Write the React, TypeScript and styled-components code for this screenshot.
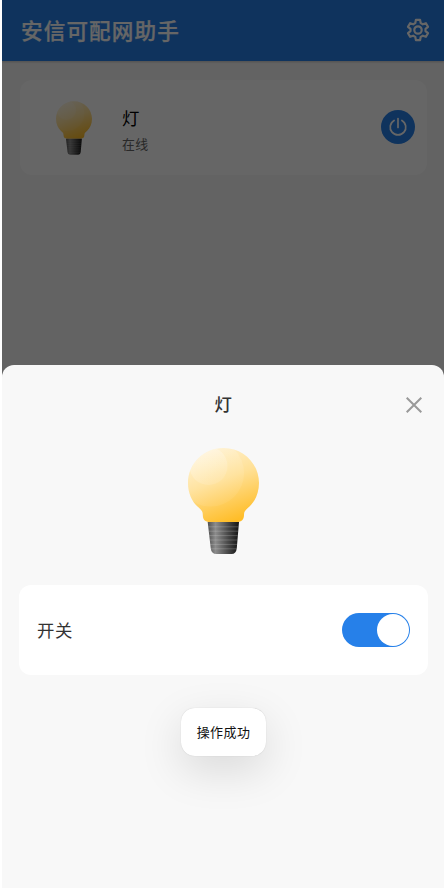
import React from 'react';
import styled, { createGlobalStyle } from 'styled-components';

const GlobalStyle = createGlobalStyle`
  * { box-sizing: border-box; }
  body { margin: 0; background: #fff; }
  button { border: 0; padding: 0; background: none; font: inherit; color: inherit; }
`;

const Screen = styled.main`
  position: relative;
  width: 442px;
  height: 888px;
  margin-left: 2px;
  overflow: hidden;
  background: #f7f7f7;
  color: #333;
  font-family: 'Noto Sans CJK SC', sans-serif;
`;

const Header = styled.header`
  display: flex;
  align-items: center;
  justify-content: space-between;
  height: 61px;
  padding: 0 14px 0 19px;
  background: #2680e9;
  color: #fff;
  box-shadow: 0 1px 2px rgba(0, 0, 0, 0.2);
`;

const Title = styled.h1`
  margin: 0 0 2px;
  font-size: 21.6px;
  letter-spacing: 1.1px;
  font-weight: 500;
  line-height: 30px;
  -webkit-text-stroke: 0.25px currentColor;
`;

const IconButton = styled.button`
  display: flex;
  align-items: center;
  justify-content: center;
  width: 24px;
  height: 24px;
`;

const SettingsButton = styled(IconButton)`
  margin-bottom: 1px;
`;

const DeviceCard = styled.section`
  display: flex;
  align-items: center;
  width: 407px;
  height: 95px;
  margin: 19px 0 0 18px;
  padding: 0 11.5px 0 36px;
  border-radius: 12px;
  background: #fff;
`;

const DeviceText = styled.div`
  flex: 1;
  margin-left: 30px;
  padding-top: 3px;
`;

const DeviceName = styled.div`
  color: #000;
  font-size: 17.4px;
  line-height: 26px;
`;

const DeviceStatus = styled.div`
  color: #666;
  font-size: 12.9px;
  letter-spacing: 0.3px;
  line-height: 20px;
  margin-top: 3px;
`;

const PowerButton = styled.button`
  display: flex;
  align-items: center;
  justify-content: center;
  width: 34px;
  height: 34px;
  margin: 0 1px 1px 0;
  border-radius: 50%;
  background: #2680e9;
`;

const Mask = styled.div`
  position: absolute;
  inset: 0;
  background: rgba(0, 0, 0, 0.6);
`;

const Sheet = styled.section`
  position: absolute;
  left: 0;
  right: 0;
  bottom: 0;
  height: 523.5px;
  display: flex;
  flex-direction: column;
  align-items: center;
  border-radius: 12px 12px 0 0;
  background: #f8f8f8;
`;

const SheetHeader = styled.div`
  display: grid;
  grid-template-columns: 1fr auto 1fr;
  align-items: center;
  width: 100%;
  height: 80px;
  padding: 0 18.5px 0 19px;
`;

const SheetTitle = styled.h2`
  grid-column: 2;
  margin: 0 0 1px;
  font-size: 17.4px;
  font-weight: 500;
  line-height: 26px;
`;

const CloseButton = styled(IconButton)`
  justify-self: end;
  margin-top: 1px;
`;

const SheetArt = styled.div`
  display: flex;
  height: 140.5px;
  padding-top: 3.5px;
  margin-left: 1px;
`;

const SwitchRow = styled.div`
  display: flex;
  align-items: center;
  justify-content: space-between;
  width: 409px;
  height: 90px;
  padding: 0 18px;
  border-radius: 12px;
  background: #fff;
`;

const SwitchLabel = styled.span`
  margin: 0 0 2px 0.5px;
  font-size: 17.4px;
  letter-spacing: 0.5px;
`;

const Switch = styled.button<{ $on: boolean }>`
  display: flex;
  align-items: center;
  justify-content: ${({ $on }) => ($on ? 'flex-end' : 'flex-start')};
  width: 68px;
  height: 34px;
  margin-top: 0.5px;
  padding: 1px;
  border-radius: 17px;
  background: ${({ $on }) => ($on ? '#2680e9' : '#ddd')};
`;

const Thumb = styled.span`
  width: 32px;
  height: 32px;
  border-radius: 50%;
  background: #fff;
`;

const Toast = styled.div`
  position: absolute;
  left: 179px;
  top: 708px;
  display: flex;
  align-items: center;
  justify-content: center;
  width: 85px;
  height: 48px;
  padding-bottom: 1px;
  border-radius: 14px;
  background: #fff;
  color: #111;
  font-size: 13px;
  letter-spacing: 0.4px;
  white-space: nowrap;
  box-shadow: 0 0 1px rgba(0, 0, 0, 0.2), 0 14px 44px rgba(0, 0, 0, 0.13);
`;

const globe =
  'M35.5 0C55.3 0 71 15.7 71 35C71 45 67 53.5 61.5 58.5C57.5 62 56 63 56 67C56 71.5 53.5 74 49 74H22C17 74 14.8 71.5 14.8 67C14.8 63 13.5 62 9.5 58.5C4 53.5 0 45 0 35C0 15.7 15.7 0 35.5 0Z';

function Bulb({ id, width, height }: { id: string; width: number; height: number }) {
  return (
    <svg width={width} height={height} viewBox="0 0 71 106" aria-hidden="true">
      <defs>
        <linearGradient id={`${id}-glass`} x1="0.25" y1="0" x2="0.6" y2="1">
          <stop offset="0" stopColor="#fff2d2" />
          <stop offset="0.45" stopColor="#ffe095" />
          <stop offset="1" stopColor="#ffbd28" />
        </linearGradient>
        <linearGradient id={`${id}-glow`} x1="0.2" y1="0" x2="0.7" y2="1">
          <stop offset="0" stopColor="#fff" stopOpacity="0.3" />
          <stop offset="1" stopColor="#fff" stopOpacity="0.1" />
        </linearGradient>
        <linearGradient id={`${id}-metal`} x1="0" y1="0" x2="1" y2="0">
          <stop offset="0" stopColor="#505050" />
          <stop offset="0.25" stopColor="#8c8c8c" />
          <stop offset="0.65" stopColor="#484848" />
          <stop offset="1" stopColor="#141414" />
        </linearGradient>
        <clipPath id={`${id}-clip`}>
          <path d={globe} />
        </clipPath>
      </defs>
      <path d={globe} fill={`url(#${id}-glass)`} />
      <g clipPath={`url(#${id}-clip)`} fill={`url(#${id}-glow)`}>
        <circle cx="22.5" cy="25" r="33.5" opacity="0.6" />
        <circle cx="20.5" cy="18" r="19" />
      </g>
      <path
        d="M19.7 74H51L48.8 100Q48.2 106 43.5 106H28.5Q23.3 106 22.7 100Z"
        fill={`url(#${id}-metal)`}
      />
      <path
        d="M20.3 78.8H50.3M20.7 83.2H50M21.2 87.6H49.6M21.5 92H49.3M22 96.4H49M22.4 100.8H48.5"
        stroke="#ddd"
        strokeWidth="0.8"
        opacity="0.3"
      />
    </svg>
  );
}

function GearIcon() {
  return (
    <svg width="24" height="24" viewBox="0 0 24 24" fill="none" stroke="#fff" strokeWidth="2.2" strokeLinejoin="round">
      <path d="M9.9 1.9H14.1L14.7 5.1L16.8 6.3L19.9 5.2L22 8.8L19.5 10.9V13.1L22 15.2L19.9 18.8L16.8 17.7L14.7 18.9L14.1 22.1H9.9L9.3 18.9L7.2 17.7L4.1 18.8L2 15.2L4.5 13.1V10.9L2 8.8L4.1 5.2L7.2 6.3L9.3 5.1Z" />
      <circle cx="12" cy="12" r="3.7" />
    </svg>
  );
}

function PowerIcon() {
  return (
    <svg width="20" height="20" viewBox="0 0 20 20" fill="none" stroke="#fff" strokeWidth="1.7" strokeLinecap="round">
      <path d="M6.1 3.4A7.8 7.8 0 1 0 13.9 3.4M10 1.5V10.4" />
    </svg>
  );
}

function CloseIcon() {
  return (
    <svg width="16" height="16" viewBox="0 0 16 16" stroke="#999" strokeWidth="2">
      <path d="M0.7 0.7L15.3 15.3M15.3 0.7L0.7 15.3" />
    </svg>
  );
}

export default function App() {
  const [on, setOn] = React.useState(true);
  return (
    <>
      <GlobalStyle />
      <Screen>
        <Header>
          <Title>安信可配网助手</Title>
          <SettingsButton aria-label="设置"><GearIcon /></SettingsButton>
        </Header>
        <DeviceCard>
          <Bulb id="device" width={36} height={54} />
          <DeviceText>
            <DeviceName>灯</DeviceName>
            <DeviceStatus>在线</DeviceStatus>
          </DeviceText>
          <PowerButton aria-label="电源"><PowerIcon /></PowerButton>
        </DeviceCard>
        <Mask />
        <Sheet>
          <SheetHeader>
            <SheetTitle>灯</SheetTitle>
            <CloseButton aria-label="关闭"><CloseIcon /></CloseButton>
          </SheetHeader>
          <SheetArt><Bulb id="sheet" width={71} height={106} /></SheetArt>
          <SwitchRow>
            <SwitchLabel>开关</SwitchLabel>
            <Switch $on={on} role="switch" aria-checked={on} aria-label="开关" onClick={() => setOn(!on)}>
              <Thumb />
            </Switch>
          </SwitchRow>
        </Sheet>
        <Toast role="status">操作成功</Toast>
      </Screen>
    </>
  );
}
